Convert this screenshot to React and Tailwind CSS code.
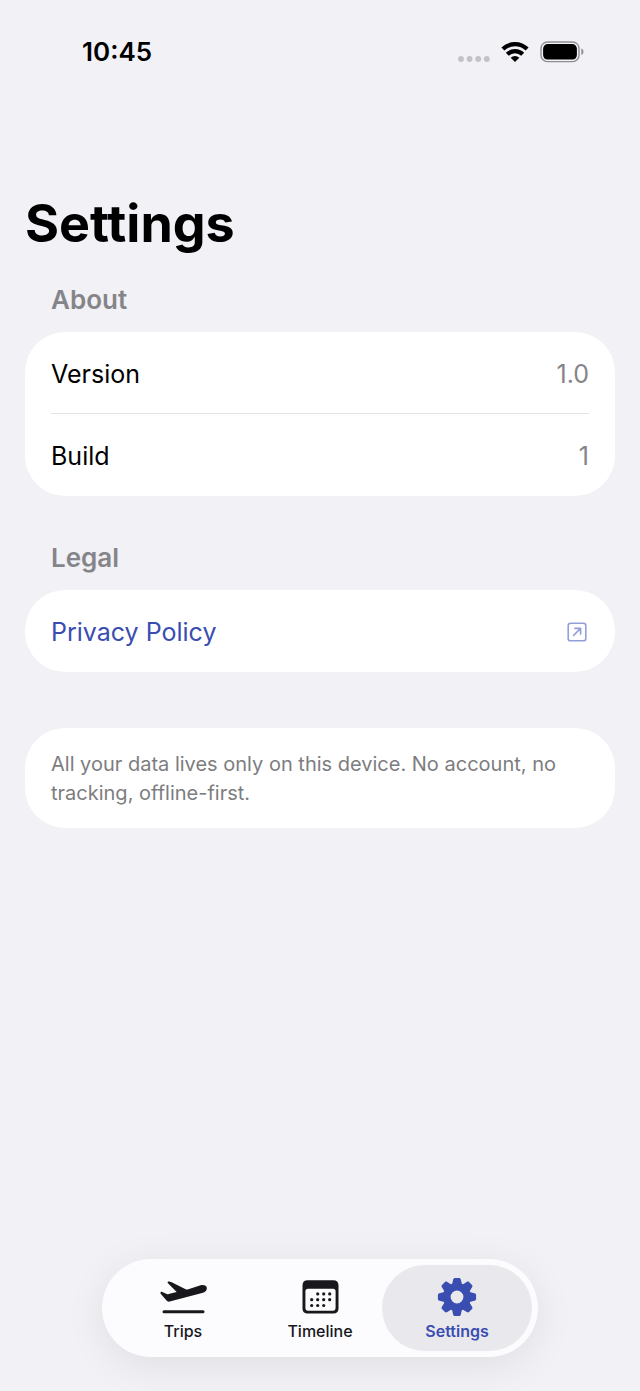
const CellularIcon = () => (
  <svg width="32" height="8" viewBox="0 0 32 8" fill="#c3c3c7" aria-hidden="true">
    <circle cx="3" cy="4" r="2.9" />
    <circle cx="11.6" cy="4" r="2.9" />
    <circle cx="20.2" cy="4" r="2.9" />
    <circle cx="28.8" cy="4" r="2.9" />
  </svg>
);

const WifiIcon = () => (
  <svg width="28" height="20" viewBox="0 0 28 20" aria-hidden="true">
    <g fill="none" stroke="#000" strokeWidth="4.2">
      <path d="M1.9 7.1a17.2 17.2 0 0 1 24.2 0" />
      <path d="M6.3 12.3a11 11 0 0 1 15.4 0" />
    </g>
    <path d="M14 20l-4.3-4.2a6.1 6.1 0 0 1 8.6 0z" />
  </svg>
);

const BatteryIcon = () => (
  <svg width="44" height="22" viewBox="0 0 44 22" aria-hidden="true">
    <rect x="1" y="1" width="38" height="19.6" rx="6.4" fill="none" stroke="#8f8f93" strokeWidth="1.4" />
    <rect x="3.1" y="3.1" width="33.8" height="15.4" rx="4.6" />
    <path d="M41.3 7.6c1.4.6 2.2 1.8 2.2 3.2s-.8 2.6-2.2 3.2z" fill="#8f8f93" />
  </svg>
);

const ExternalIcon = () => (
  <svg width="20" height="20" viewBox="0 0 20 20" fill="none" stroke="#939fd6" strokeWidth="1.6" strokeLinecap="round" strokeLinejoin="round" aria-hidden="true">
    <rect x="1.2" y="1.2" width="17.6" height="17.6" rx="2.4" />
    <path d="M6.6 13.4l6.6-6.600M7.9 6.400h5.700v5.700" />
  </svg>
);

const PlaneIcon = () => (
  <svg width="48" height="36" viewBox="0 0 144 108" fill="#17171c" aria-hidden="true">
    <path d="M5 44c-2-4 1-7 5-5l13 6c2 1 4 1 6 0l24-6-26-26c-3-4 0-6 6-5 2 0 3 1 5 2l42 21c3 1 5 1 8 0l37-12c8-2 16 0 18 6 2 7-2 13-11 16L35 67c-6 2-10 1-13-3z" />
    <path d="M15 98.500h117" stroke="#17171c" strokeWidth="9" strokeLinecap="round" />
  </svg>
);

const CalendarIcon = () => (
  <svg width="38" height="36" viewBox="0 0 38 36" fill="#17171c" aria-hidden="true">
    <path fillRule="evenodd" d="M6.700 1.200h25.600c3.400 0 5.200 1.900 5.200 5.200v23c0 3.400-1.800 5.200-5.200 5.200H6.700c-3.400 0-5.200-1.800-5.200-5.200v-23c0-3.300 1.800-5.200 5.200-5.200zM7 9.700c-1.700 0-2.600.9-2.600 2.500v16.900c0 1.700.9 2.600 2.600 2.600h25c1.700 0 2.600-.9 2.600-2.600V12.200c0-1.600-.9-2.500-2.600-2.500z" />
    <g>
      <circle cx="16.700" cy="14.900" r="1.600" />
      <circle cx="22.700" cy="14.900" r="1.600" />
      <circle cx="28.700" cy="14.900" r="1.600" />
      <circle cx="10.700" cy="20.700" r="1.600" />
      <circle cx="16.700" cy="20.700" r="1.600" />
      <circle cx="22.700" cy="20.700" r="1.600" />
      <circle cx="28.700" cy="20.700" r="1.600" />
      <circle cx="10.700" cy="26.500" r="1.600" />
      <circle cx="16.700" cy="26.500" r="1.600" />
      <circle cx="22.700" cy="26.500" r="1.600" />
    </g>
  </svg>
);

const GearIcon = () => (
  <svg width="40" height="40" viewBox="-20 -20 40 40" fill="#3a4db1" aria-hidden="true">
    <circle r="10.200" fill="none" stroke="#3a4db1" strokeWidth="7.600" />
    {[0, 45, 90, 135, 180, 225, 270, 315].map((angle) => (
      <path
        key={angle}
        transform={`rotate(${angle})`}
        d="M-5-12.500l1.200-5c.3-1.100.8-1.600 1.700-1.600h4.200c.9 0 1.400.5 1.700 1.600l1.200 5z"
      />
    ))}
  </svg>
);

const tabs = [
  { id: 'trips', label: 'Trips', Icon: PlaneIcon },
  { id: 'timeline', label: 'Timeline', Icon: CalendarIcon },
  { id: 'settings', label: 'Settings', Icon: GearIcon },
];

const StatusBar = () => (
  <header className="flex h-26 items-center justify-between pr-14 pl-[82px]">
    <span className="text-[26px] leading-8 font-semibold">10:45</span>
    <div className="flex items-center gap-[11px]">
      <div className="flex items-center gap-[11px]">
        <div className="pt-3.5">
          <CellularIcon />
        </div>
        <WifiIcon />
      </div>
      <BatteryIcon />
    </div>
  </header>
);

const SectionTitle = ({ children }) => (
  <h2 className="mb-4 px-[26px] text-[26px] leading-8 font-semibold text-[#858589]">{children}</h2>
);

const Row = ({ label, value }) => (
  <div className="flex h-[82px] items-center justify-between pt-0.5">
    <dt>{label}</dt>
    <dd className="text-[#858589]">{value}</dd>
  </div>
);

const TabBar = ({ active }) => (
  <nav className="mx-auto mt-auto mb-[34px] flex rounded-full bg-[#fcfcff] p-1.5 shadow-[0_8px_40px_rgba(0,0,0,0.08)]">
    {tabs.map(({ id, label, Icon }) => (
      <button
        key={id}
        type="button"
        className={`flex h-[86px] w-[150px] flex-col items-center rounded-full pt-3 not-first:-ml-[13px] ${
          active === id ? 'bg-[#e9e9ed] text-[#3a4db1]' : 'text-[#17171c]'
        }`}
      >
        <span className="flex h-10 items-center">
          <Icon />
        </span>
        <span className={`text-base leading-7 ${active === id ? 'font-semibold' : 'font-medium'}`}>{label}</span>
      </button>
    ))}
  </nav>
);

export default function App() {
  return (
    <div className="flex min-h-screen flex-col bg-[#f1f1f6] font-[Inter,sans-serif] text-black">
      <StatusBar />
      <main className="px-[25px] pt-[88px] pb-10 text-[25px] leading-8">
        <h1 className="text-[52px] leading-16 font-bold">Settings</h1>

        <section className="mt-7">
          <SectionTitle>About</SectionTitle>
          <dl className="divide-y divide-[#e4e4e6] rounded-[40px] bg-white px-[26px]">
            <Row label="Version" value="1.0" />
            <Row label="Build" value="1" />
          </dl>
        </section>

        <section className="mt-[46px]">
          <SectionTitle>Legal</SectionTitle>
          <a href="#privacy" className="flex h-[82px] items-center justify-between rounded-[40px] bg-white pt-0.5 pr-7 pl-[26px] text-[#3a4db1]">
            Privacy Policy
            <ExternalIcon />
          </a>
        </section>

        <p className="mt-14 rounded-[40px] bg-white px-[26px] pt-[22px] pb-5 text-[20px] leading-[29px] text-[#7d7d80]">
          All your data lives only on this device. No account, no tracking, offline-first.
        </p>
      </main>
      <TabBar active="settings" />
    </div>
  );
}
